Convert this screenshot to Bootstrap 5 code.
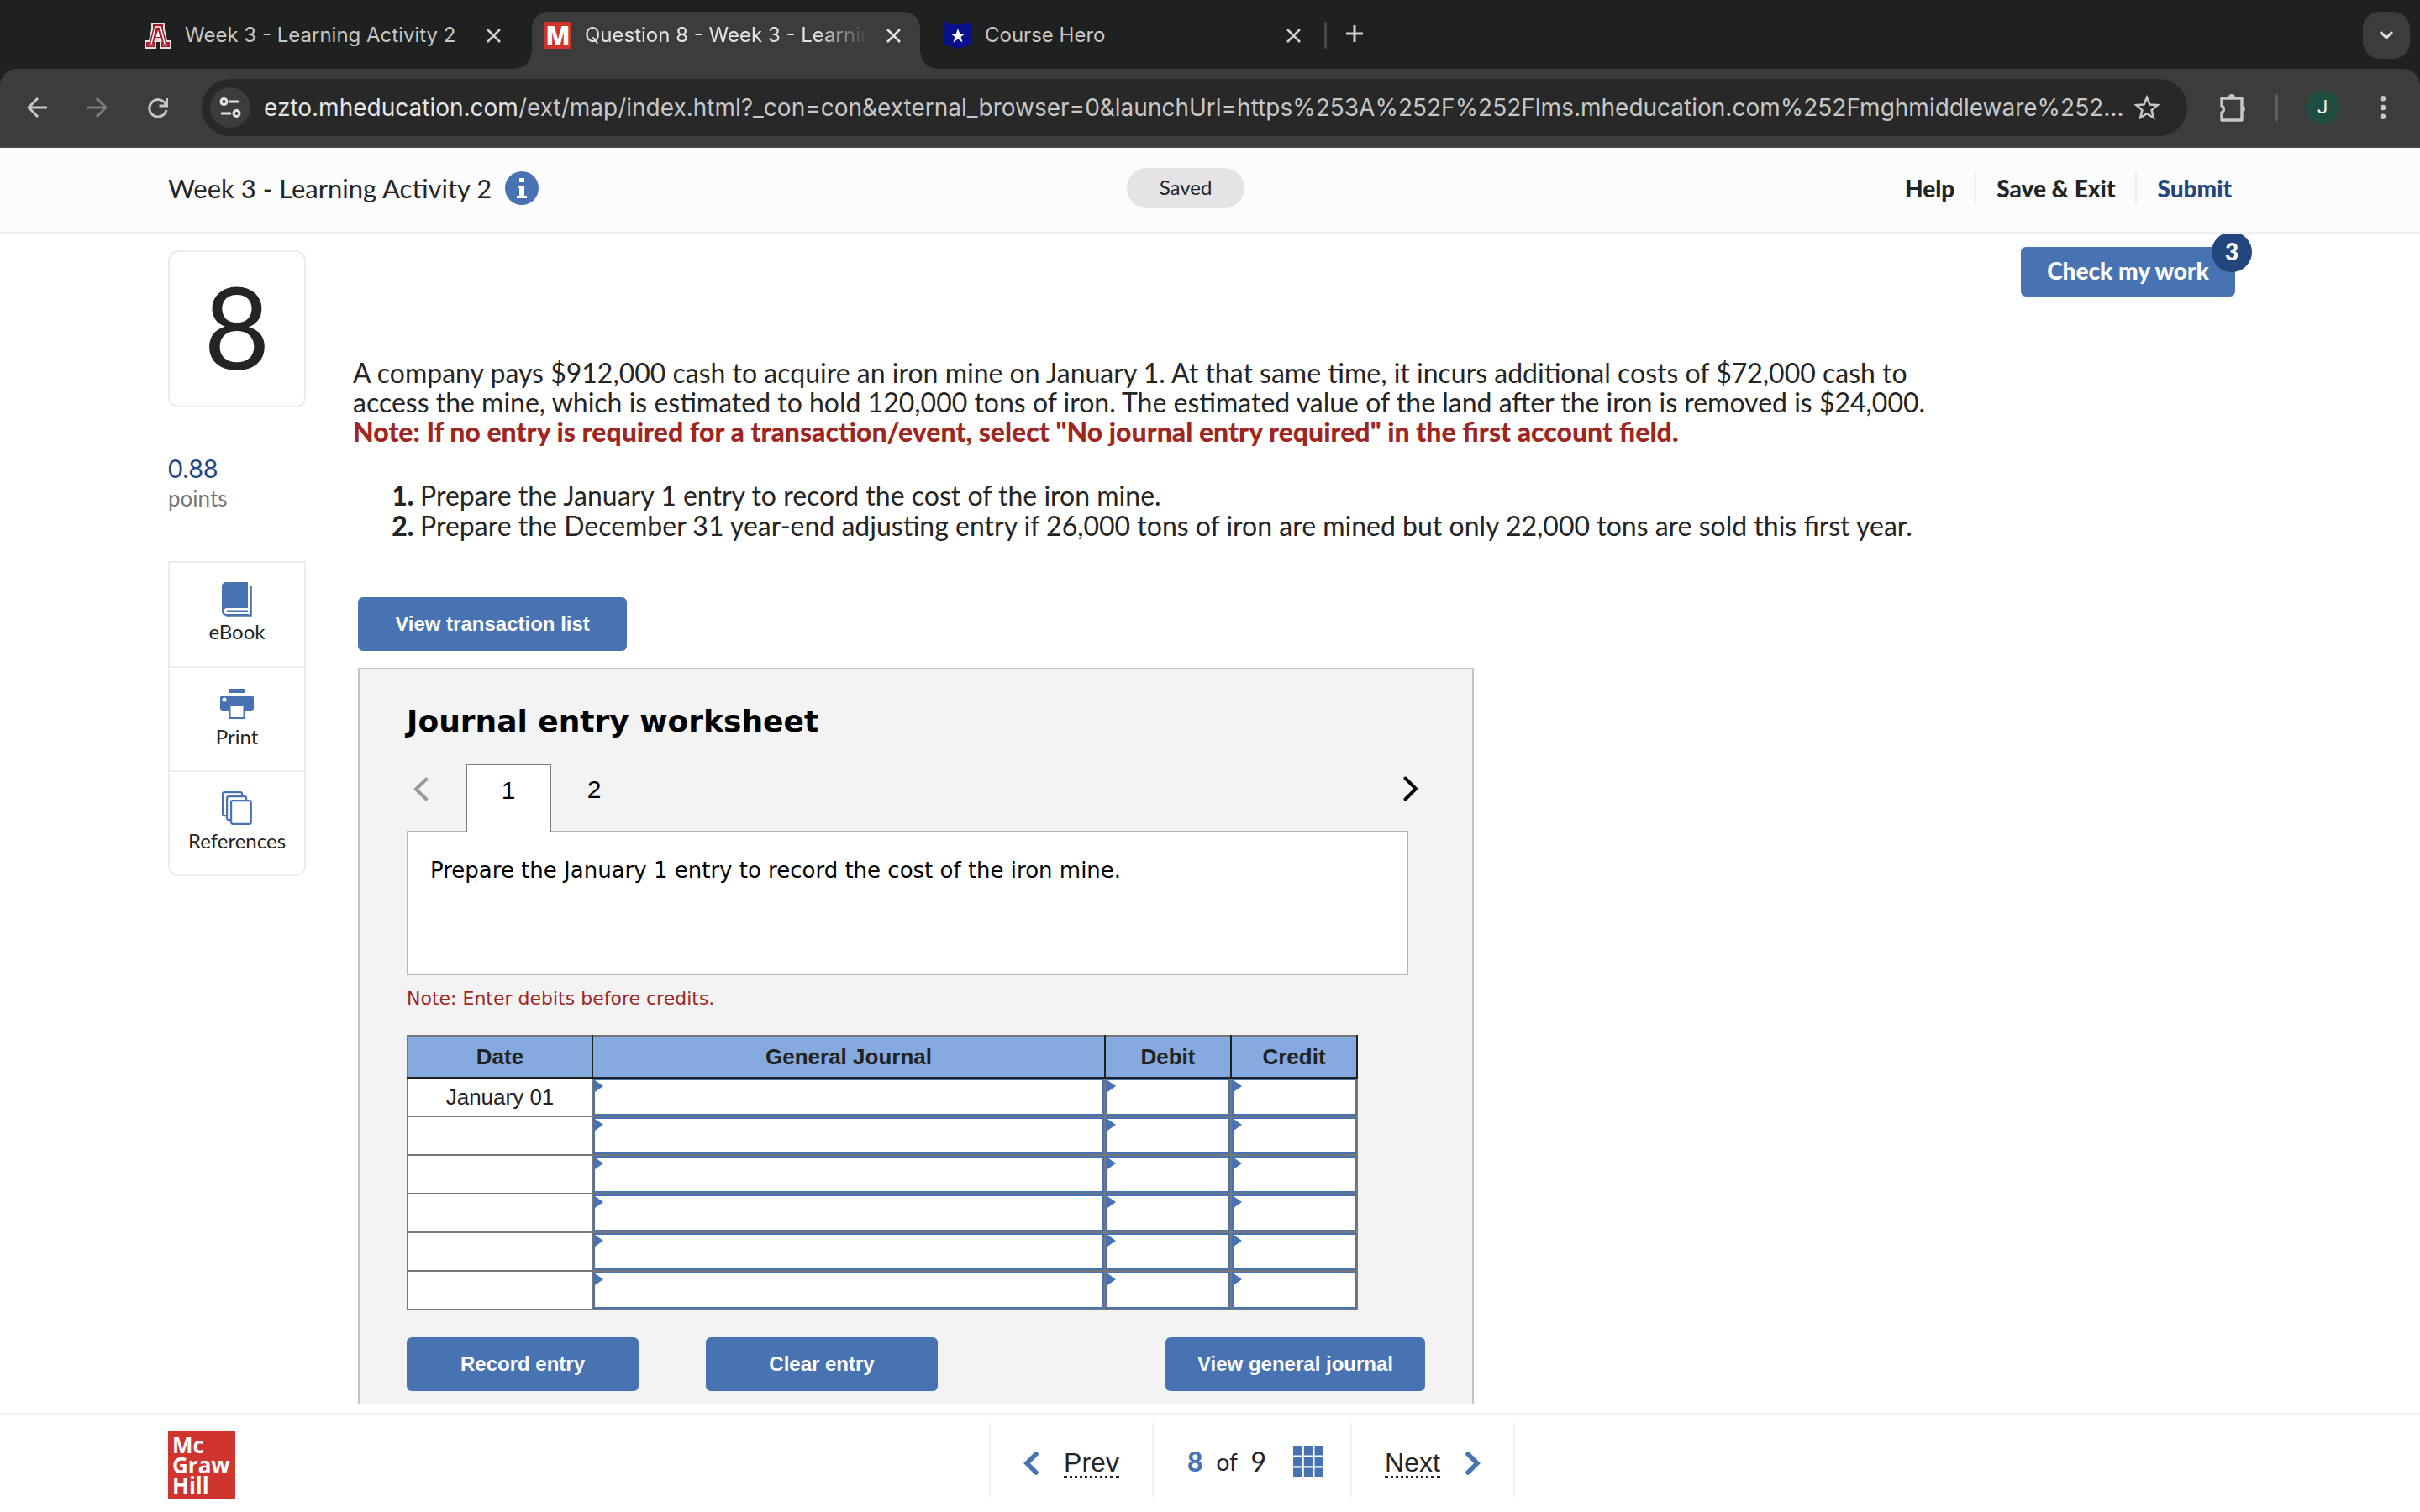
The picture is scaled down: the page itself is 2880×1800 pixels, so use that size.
<!DOCTYPE html>
<html lang="en">
<head>
<meta charset="utf-8">
<meta name="viewport" content="width=device-width, initial-scale=1">
<title>Question 8 - Week 3 - Learning Activity 2</title>
<link href="https://cdn.jsdelivr.net/npm/bootstrap@5.3.0/dist/css/bootstrap.min.css" rel="stylesheet">
<style>
:root{--blue:#4873b3;--navy:#24467f;--red:#a1251f;--ink:#242424;--line:#ececec;--chrome:#3c3c3c;--strip:#1f2120}
body{font-family:Lato,"Open Sans",sans-serif;color:var(--ink);background:#fff;height:100vh;overflow:hidden;line-height:36px;font-size:32px}
button{border:0;background:none;padding:0;color:inherit}
a{color:inherit;text-decoration:none}
svg{display:block;flex:none}
/* browser chrome */
.tabstrip{height:82px;background:var(--strip);padding:14px 12px 0 157px;gap:14px;font:24px/68px Inter,sans-serif;color:#c7c7c7}
.btab{width:462px;height:68px;padding:0 23px 0 15px;position:relative}
.btab.is-on{background:var(--chrome);color:#e3e3e3;border-radius:20px 20px 0 0}
.btab.is-on::before,.btab.is-on::after{content:"";position:absolute;bottom:0;width:20px;height:20px}
.btab.is-on::before{left:-20px;background:radial-gradient(circle at 0 0,transparent 19px,var(--chrome) 20px)}
.btab.is-on::after{right:-20px;background:radial-gradient(circle at 100% 0,transparent 19px,var(--chrome) 20px)}
.btab-title{flex:1;overflow:hidden;white-space:nowrap;height:56px;line-height:56px}
.is-on .btab-title{-webkit-mask-image:linear-gradient(to right,#000 calc(100% - 66px),transparent calc(100% - 6px));mask-image:linear-gradient(to right,#000 calc(100% - 66px),transparent calc(100% - 6px))}
.btab-row{height:56px;width:100%;gap:16px;align-self:flex-start}
.fav-m{width:32px;height:32px;background:#cf342f;color:#fff;font:900 30px/32px "Open Sans",sans-serif;text-align:center}
.tabsep{width:3px;height:32px;background:#474747;border-radius:2px;margin:12px 0 0 -9px}
.newtab{margin:16px 0 0 9px;height:20px}
.tabsearch{width:56px;height:56px;border-radius:20px;background:var(--chrome)}
.strip-under{background:var(--strip)}
.toolbar{height:94px;background:var(--chrome);border-radius:20px 20px 0 0;border-bottom:2px solid #4a4a4a;padding:0 40px 0 32px;color:#c7c7c7}
.omni{height:68px;border-radius:34px;background:#282828;font:28px/68px Inter,sans-serif;padding:0 33px 0 10px;margin-left:40px;margin-right:38px}
.omni label{color:#e6e6e6;margin-left:16px}
.omni input{flex:1;min-width:0;border:0;padding:0;background:none;color:#c7c7c7;font:inherit;text-overflow:ellipsis;outline:0}
.site{width:48px;height:48px;border-radius:50%;background:var(--chrome)}
.vsep{width:3px;height:32px;border-radius:2px;background:#5e5e5e;margin:0 33px 0 34px}
.avatar{width:40px;height:40px;border-radius:50%;background:#1f4d42;color:#fff;font:22px/40px Roboto,sans-serif;margin-right:48px}
/* assignment header */
.top{height:102px;background:#fcfcfc;border-bottom:2px solid #efefef;padding:0 224px 4px 200px}
.top-title{font-size:31px}
.saved{width:140px;height:48px;border-radius:24px;background:#e5e3e6;font-size:24px;line-height:46px}
.saved-wrap{padding-right:62px}
.acts button{font-size:28px;font-weight:900;line-height:40px;padding:0 24px}
.acts button+button{border-left:2px solid var(--line)}
.acts button:last-child{padding-right:0;color:var(--navy)}
/* main */
main{padding:0 220px 0 200px;gap:56px;overflow:hidden;margin-bottom:11px;min-height:0}
.side{width:164px;padding-top:20px;flex:none}
.qnum{height:187px;border:2px solid var(--line);border-radius:12px;font-size:136px;line-height:175px}
.pts{margin:54px 0 57px}
.pts-v{color:var(--navy);font-size:30px}
.pts-l{color:#757575;font-size:26px}
.tools{border:2px solid var(--line);border-radius:0 0 12px 12px}
.tools button{width:100%;height:123px;font-size:24px;line-height:36px}
.tools button+button{height:124px;border-top:2px solid var(--line)}
.icobox{height:41px}
.bluebtn{background:var(--blue);color:#fff;border-radius:6px;height:64px;font:bold 24px/64px "Liberation Sans",Arial,sans-serif}
.checkrow{padding-top:16px}
.checkbtn{width:255px;height:59px;padding-bottom:4px;background:var(--blue);color:#fff;border-radius:6px;font-size:28px;font-weight:900;line-height:54px}
.checknum{position:absolute;right:-20px;top:-18px;width:48px;height:48px;border-radius:50%;background:var(--navy);line-height:46px}
.stem{margin:73px 0 0;line-height:35px}
.stem strong{color:var(--red);font-weight:900}
.steps{margin:41px 0 67px;padding-left:80px}
.steps li::marker{font-weight:900}
.sheet-wrap{padding-left:6px}
.sheet{width:1328px;margin-top:20px;border:2px solid #c4c4c4;background:#f3f3f3;padding:40px 56px 200px;color:#000;font-family:"DejaVu Sans",Verdana,sans-serif}
.sheet h2{font-size:36px;font-weight:bold;line-height:44px;margin:0 0 28px}
.wtabs{font:30px/60px "Liberation Sans",Arial,sans-serif;height:80px}
.wtabs .arrow{height:60px;padding:0 8px}
.wtabs .arrow-prev{width:70px}
.wtab{width:102px;height:82px;line-height:60px;text-align:center;padding-bottom:20px}
.wtab.is-on{background:#fff;border:2px solid #7f7f7f;border-bottom:0;position:relative;height:82px}
.task{height:172px;margin-right:20px;border:2px solid #b5b5b5;background:#fff;padding:29px 26px 0;font-size:26px;line-height:32px}
.hint{margin:12px 0 27px;font-size:22px;line-height:32px;color:var(--red)}
.jrnl{border-collapse:collapse;table-layout:fixed;width:1132px;color:#222;font:26px/30px "Liberation Sans",Arial,sans-serif;text-align:center}
.col-date{width:220px}.col-acct{width:610px}.col-amt{width:150px}
.jrnl th{height:50px;background:#84aae0;border:2px solid #1f1f1f;border-top-color:#777;padding:0}
.jrnl th:first-child{border-left-color:#777}
.jrnl td{height:46px;background:#fff;border:2px solid #777;padding:0;position:relative}
.jrnl thead+tbody tr:first-child td{border-top-color:#1f1f1f}
.jrnl input{display:block;width:100%;height:44px;border:2px solid var(--blue);border-radius:0;padding:0 12px;background:#fff;outline:0;font:inherit}
.cellin::before{content:"";position:absolute;left:2px;top:2px;border:7px solid transparent;border-left:10px solid var(--blue);border-right:0}
.sheetbtns{margin-top:32px;gap:80px}
.w-rec{width:276px}.w-gen{width:309px}.w-view{width:320px}
/* footer */
footer{height:118px;border-top:2px solid #f1f1f1;padding:10px 180px 0 200px}
.mgh{width:80px;height:80px;background:#cf342f;color:#fff;font:bold 26px/24px "Open Sans",sans-serif;padding:4px 0 0 5px;margin-top:10px}
.pager{height:88px;border-right:2px solid #f1f1f1}
.pager>div{border-left:2px solid #f1f1f1;height:88px}
.pg-side{width:194px;gap:30px;padding-top:8px}
.pg-mid{width:236px;padding:4px 32px 0 40px;font-size:32px}
.pg-mid b{color:var(--blue);font-weight:900}
.pg-of{font-size:28px}
.pager a{font:32px/32px "Liberation Sans",Arial,sans-serif;border-bottom:3px dotted #242424}
</style>
</head>
<body class="d-flex flex-column">
<div class="tabstrip d-flex flex-shrink-0">
  <div class="btab d-flex"><div class="btab-row d-flex align-items-center">
    <svg width="32" height="32" viewBox="0 0 32 32" aria-hidden="true"><path d="M8 1h16v8l3 13h5v10H18v-8h-4v8H0V22h5L8 9z" fill="#e8e0e0"/><path d="M10 3h12v6l4 15h4v6H20v-6h1l-1-3h-8l-1 3h1v6H2v-6h4l4-15z" fill="#a91b2c"/><path d="M16 10l2.500 8h-5z" fill="#fff"/><path d="M13 6h6l5 20M13 6L8 26M4.500 27.500h6M21.500 27.500h6M12 20h8" fill="none" stroke="#fff" stroke-width="1.500"/></svg>
    <div class="btab-title">Week 3 - Learning Activity 2</div>
    <button aria-label="Close tab"><svg width="17" height="17" viewBox="0 0 17 17" stroke="#d0d0d0" stroke-width="2.6"><path d="M1 1l15 15M16 1L1 16"/></svg></button>
  </div></div>
  <div class="btab is-on d-flex"><div class="btab-row d-flex align-items-center">
    <div class="fav-m">M</div>
    <div class="btab-title">Question 8 - Week 3 - Learning Activity 2</div>
    <button aria-label="Close tab"><svg width="17" height="17" viewBox="0 0 17 17" stroke="#e3e3e3" stroke-width="2.6"><path d="M1 1l15 15M16 1L1 16"/></svg></button>
  </div></div>
  <div class="btab d-flex"><div class="btab-row d-flex align-items-center">
    <svg width="32" height="32" viewBox="0 0 32 32" aria-hidden="true"><path d="M0 0l16 4 16-4v27l-16 5-16-5z" fill="#08108c"/><path d="M16 8l2.200 6h6.500l-5.200 4 2 6.500L16 20.600l-5.500 3.900 2-6.500-5.200-4h6.500z" fill="#fff"/></svg>
    <div class="btab-title">Course Hero</div>
    <button aria-label="Close tab"><svg width="17" height="17" viewBox="0 0 17 17" stroke="#d0d0d0" stroke-width="2.6"><path d="M1 1l15 15M16 1L1 16"/></svg></button>
  </div></div>
  <div class="tabsep"></div>
  <button class="newtab" aria-label="New tab"><svg width="20" height="20" viewBox="0 0 20 20" stroke="#d0d0d0" stroke-width="3"><path d="M10 0v20M0 10h20"/></svg></button>
  <button class="tabsearch ms-auto d-flex align-items-center justify-content-center" aria-label="Search tabs"><svg width="18" height="12" viewBox="0 0 18 12" fill="none" stroke="#e3e3e3" stroke-width="3"><path d="M2 2l7 7 7-7"/></svg></button>
</div>
<div class="strip-under flex-shrink-0">
<div class="toolbar d-flex align-items-center">
  <button aria-label="Back"><svg width="24" height="24" viewBox="0 0 24 24" fill="none" stroke="#c7c7c7" stroke-width="3"><path d="M24 12H2M13 1L2 12l11 11"/></svg></button>
  <button class="ms-5" aria-label="Forward"><svg width="24" height="24" viewBox="0 0 24 24" fill="none" stroke="#7d7d7d" stroke-width="3"><path d="M0 12h22M11 1l11 11-11 11"/></svg></button>
  <button class="ms-5" aria-label="Reload"><svg width="24" height="24" viewBox="0 0 24 24" fill="none" stroke="#c7c7c7" stroke-width="3"><path d="M22.500 1v9h-9M21.500 9A10.200 10.200 0 1 0 22 15"/></svg></button>
  <div class="omni d-flex align-items-center flex-grow-1">
    <button class="site d-flex align-items-center justify-content-center" aria-label="Site information"><svg width="26" height="26" viewBox="0 0 26 26" fill="none" stroke="#e3e3e3" stroke-width="3"><circle cx="5.500" cy="6" r="3.500"/><path d="M12 6h12M2 20h12"/><circle cx="20.500" cy="20" r="3.500"/></svg></button>
    <label for="url">ezto.mheducation.com</label><input id="url" type="text" value="/ext/map/index.html?_con=con&amp;external_browser=0&amp;launchUrl=https%253A%252F%252Flms.mheducation.com%252Fmghmiddleware%252...">
    <button aria-label="Bookmark"><svg width="30" height="30" viewBox="0 0 30 30" fill="none" stroke="#c7c7c7" stroke-width="2.600"><path d="M15 3l3.500 8.500 9 .7-6.900 5.900 2.200 8.900L15 22.200 7.200 27l2.200-8.900L2.500 12.200l9-.7z"/></svg></button>
  </div>
  <button aria-label="Extensions"><svg width="33" height="33" viewBox="0 0 33 33" fill="none" stroke="#c7c7c7" stroke-width="3.400" stroke-linejoin="round"><path d="M3 5h24v26H3v-9a4.500 4.500 0 0 0 0-8z"/><path d="M11 4a4 4 0 0 1 8 0zM28 13.500a4.200 4.200 0 0 1 0 8z" fill="#c7c7c7" stroke="none"/></svg></button>
  <div class="vsep"></div>
  <button class="avatar text-center" aria-label="Profile">J</button>
  <button aria-label="Menu"><svg width="8" height="28" viewBox="0 0 8 28" fill="#c7c7c7"><circle cx="4" cy="3.300" r="3.300"/><circle cx="4" cy="14" r="3.300"/><circle cx="4" cy="24.700" r="3.300"/></svg></button>
</div>
</div>
<header class="top d-flex align-items-center flex-shrink-0">
  <span class="top-title">Week 3 - Learning Activity 2</span>
  <button class="ms-3" aria-label="Information"><svg width="40" height="40" viewBox="0 0 40 40"><circle cx="20" cy="20" r="20" fill="#4873b3"/><path d="M17 8h6v5h-6zM15 17h8v12h3v3H14v-3h3v-9h-2z" fill="#fff"/></svg></button>
  <div class="saved-wrap flex-grow-1 d-flex justify-content-center"><div class="saved text-center">Saved</div></div>
  <div class="acts d-flex"><button>Help</button><button>Save &amp; Exit</button><button>Submit</button></div>
</header>
<main class="d-flex flex-grow-1">
  <aside class="side">
    <div class="qnum text-center">8</div>
    <div class="pts"><div class="pts-v">0.88</div><div class="pts-l">points</div></div>
    <div class="tools">
      <button><span class="icobox d-flex align-items-center justify-content-center"><svg width="36" height="41" viewBox="0 0 36 41"><path d="M5 0h26v31H6a3.500 3.500 0 0 0 0 7h25v2H5a5 5 0 0 1-5-5V5a5 5 0 0 1 5-5z" fill="#4873b3"/><path d="M6 34.500h25" stroke="#4873b3" stroke-width="2"/><path d="M34.500 5v34.500H5" fill="none" stroke="#4873b3" stroke-width="2.600"/></svg></span>eBook</button>
      <button><span class="icobox d-flex align-items-center justify-content-center"><svg width="40" height="36" viewBox="0 0 40 36"><path d="M10 0h20v5H10zM3 8h34a3 3 0 0 1 3 3v12a3 3 0 0 1-3 3h-7v10H10V26H3a3 3 0 0 1-3-3V11a3 3 0 0 1 3-3z" fill="#4873b3"/><path d="M12.500 20.500h15v13h-15z" fill="#fff"/><circle cx="5" cy="13" r="2.500" fill="#fff"/></svg></span>Print</button>
      <button><span class="icobox d-flex align-items-center justify-content-center"><svg width="36" height="40" viewBox="0 0 36 40" stroke="#4873b3" stroke-width="2.200" fill="#fff"><rect x="1.100" y="1.100" width="23" height="28" rx="2"/><rect x="6.100" y="6.100" width="23" height="28" rx="2"/><rect x="11.100" y="11.100" width="23.700" height="27.700" rx="2"/></svg></span>References</button>
    </div>
  </aside>
  <section class="flex-grow-1">
    <div class="checkrow d-flex justify-content-end"><button class="checkbtn position-relative">Check my work<span class="checknum">3</span></button></div>
    <p class="stem">A company pays $912,000 cash to acquire an iron mine on January 1. At that same time, it incurs additional costs of $72,000 cash to<br>access the mine, which is estimated to hold 120,000 tons of iron. The estimated value of the land after the iron is removed is $24,000.<br><strong>Note: If no entry is required for a transaction/event, select "No journal entry required" in the first account field.</strong></p>
    <ol class="steps"><li>Prepare the January 1 entry to record the cost of the iron mine.</li><li>Prepare the December 31 year-end adjusting entry if 26,000 tons of iron are mined but only 22,000 tons are sold this first year.</li></ol>
    <div class="sheet-wrap">
      <button class="bluebtn w-view d-block">View transaction list</button>
      <div class="sheet">
        <h2>Journal entry worksheet</h2>
        <div class="wtabs d-flex align-items-start">
          <button class="arrow arrow-prev" aria-label="Previous entry"><svg width="18" height="29" viewBox="0 0 18 29" fill="none" stroke="#999" stroke-width="4"><path d="M16.500 1.500L3 14.500l13.500 13"/></svg></button>
          <button class="wtab is-on">1</button>
          <button class="wtab">2</button>
          <button class="arrow ms-auto" aria-label="Next entry"><svg width="18" height="30" viewBox="0 0 18 30" fill="none" stroke="#000" stroke-width="4" stroke-linecap="round"><path d="M2.500 2.500L15 15 2.500 27.500"/></svg></button>
        </div>
        <div class="task">Prepare the January 1 entry to record the cost of the iron mine.</div>
        <p class="hint">Note: Enter debits before credits.</p>
        <table class="jrnl">
          <colgroup><col class="col-date"><col class="col-acct"><col class="col-amt"><col class="col-amt"></colgroup>
          <thead><tr><th>Date</th><th>General Journal</th><th>Debit</th><th>Credit</th></tr></thead>
          <tbody>
            <tr><td>January 01</td><td class="cellin"><input aria-label="Account 1"></td><td class="cellin"><input aria-label="Debit 1"></td><td class="cellin"><input aria-label="Credit 1"></td></tr>
            <tr><td></td><td class="cellin"><input aria-label="Account 2"></td><td class="cellin"><input aria-label="Debit 2"></td><td class="cellin"><input aria-label="Credit 2"></td></tr>
            <tr><td></td><td class="cellin"><input aria-label="Account 3"></td><td class="cellin"><input aria-label="Debit 3"></td><td class="cellin"><input aria-label="Credit 3"></td></tr>
            <tr><td></td><td class="cellin"><input aria-label="Account 4"></td><td class="cellin"><input aria-label="Debit 4"></td><td class="cellin"><input aria-label="Credit 4"></td></tr>
            <tr><td></td><td class="cellin"><input aria-label="Account 5"></td><td class="cellin"><input aria-label="Debit 5"></td><td class="cellin"><input aria-label="Credit 5"></td></tr>
            <tr><td></td><td class="cellin"><input aria-label="Account 6"></td><td class="cellin"><input aria-label="Debit 6"></td><td class="cellin"><input aria-label="Credit 6"></td></tr>
          </tbody>
        </table>
        <div class="sheetbtns d-flex"><button class="bluebtn w-rec">Record entry</button><button class="bluebtn w-rec">Clear entry</button><button class="bluebtn w-gen ms-auto">View general journal</button></div>
      </div>
    </div>
  </section>
</main>
<footer class="d-flex flex-shrink-0">
  <div class="mgh">Mc<br>Graw<br>Hill</div>
  <div class="flex-grow-1 d-flex justify-content-center">
    <nav class="pager d-flex" aria-label="Questions">
      <div class="pg-side d-flex align-items-center justify-content-center"><svg width="18" height="28" viewBox="0 0 18 28" fill="none" stroke="#4873b3" stroke-width="5.500" stroke-linecap="round"><path d="M15 3L4 14l11 11"/></svg><a href="#">Prev</a></div>
      <div class="pg-mid d-flex align-items-center justify-content-between"><b>8</b><span class="pg-of">of</span><span>9</span><button class="ms-3" aria-label="All questions"><svg width="36" height="36" viewBox="0 0 36 36" fill="#4873b3"><path d="M0 0h10.500v10.500H0zM12.800 0h10.500v10.500H12.800zM25.500 0H36v10.500H25.500zM0 12.800h10.500v10.500H0zM12.800 12.800h10.500v10.500H12.800zM25.500 12.800H36v10.500H25.500zM0 25.500h10.500V36H0zM12.800 25.500h10.500V36H12.800zM25.500 25.500H36V36H25.500z"/></svg></button></div>
      <div class="pg-side d-flex align-items-center justify-content-center"><a href="#">Next</a><svg width="18" height="28" viewBox="0 0 18 28" fill="none" stroke="#4873b3" stroke-width="5.500" stroke-linecap="round"><path d="M3 3l11 11L3 25"/></svg></div>
    </nav>
  </div>
</footer>
<script src="https://cdn.jsdelivr.net/npm/bootstrap@5.3.0/dist/js/bootstrap.bundle.min.js"></script>
</body>
</html>
